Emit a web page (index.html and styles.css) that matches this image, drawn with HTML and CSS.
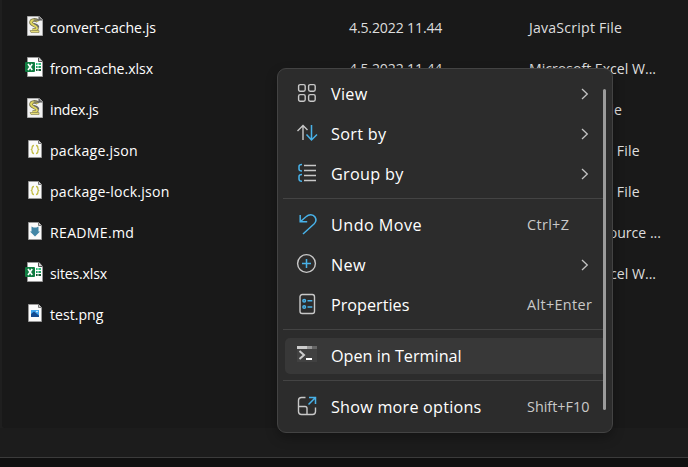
FILE: index.html
```html
<!DOCTYPE html>
<html lang="en">
<head>
<meta charset="utf-8">
<title>Files</title>
<link rel="stylesheet" href="styles.css">
</head>
<body>
<svg class="defs" width="0" height="0">
  <symbol id="js" viewBox="0 0 20 22">
    <path d="M2.500 1.500h12l3 3v16h-15z" fill="#f2f2f2" stroke="#aaa"/>
    <path d="M14 1.500v3.500h3.500" fill="#777" stroke="#555"/>
    <path d="M13 6.500C11 4 6 4.500 6 7.500c0 2.500 6 3 6 5.500 0 2-2 2-4.500 2" fill="none" stroke="#77734e" stroke-width="3.600"/>
    <path d="M13 6.500C11 4 6 4.500 6 7.500c0 2.500 6 3 6 5.500 0 2-2 2-4.500 2" fill="none" stroke="#e0d660" stroke-width="2"/>
    <path d="M9 8.500c2 1 5 1 4.500 4M8.500 5.200L14.500 5" fill="none" stroke="#666" stroke-width="1.300"/>
    <path d="M5 15.500h9v2H6z" fill="#e5dc78" stroke="#8a8555" stroke-width=".7"/>
  </symbol>
  <symbol id="xlsx" viewBox="0 0 20 22">
    <path d="M2.500 1.500h11.500l3.500 4v15h-15z" fill="#fff" stroke="#999"/>
    <path d="M13.500 1.500v4h4" fill="#ccc" stroke="#555"/>
    <path d="M11 7h5v2h-5z" fill="#33c481"/><path d="M11 10h5v2h-5z" fill="#21a366"/><path d="M11 13h5v2h-5z" fill="#185c37"/>
    <path d="M13 6v10" stroke="#fff" stroke-width=".8"/>
    <rect x="0" y="6" width="10" height="10" rx="1" fill="#107c41"/>
    <path d="M3 8l4.200 6M7.200 8l-4.200 6" stroke="#fff" stroke-width="1.600"/>
  </symbol>
  <symbol id="page" viewBox="0 0 20 22">
    <path d="M3.500 2.500h10l3 3v14h-13z" fill="#fafafa" stroke="#999"/>
    <path d="M13.500 2.500v3h3" fill="#ccc" stroke="#777"/>
  </symbol>
  <symbol id="json" viewBox="0 0 20 22">
    <use href="#page"/>
    <path d="M9 7.500c-3 0-1 3-2.500 4 1.500 1-.5 4 2.500 4M11 7.500c3 0 1 3 2.500 4-1.500 1 .5 4-2.500 4" fill="none" stroke="#c3bd45" stroke-width="1.300"/>
  </symbol>
  <symbol id="md" viewBox="0 0 20 22">
    <use href="#page"/>
    <path d="M6.500 6.500l2 1h3l2-1v5h1.500l-5 5-5-5h1.500z" fill="#4286a6"/>
  </symbol>
  <symbol id="png" viewBox="0 0 20 22">
    <use href="#page"/>
    <rect x="6" y="8" width="8" height="7" fill="#41a5ee"/>
    <path d="M6 12l3-2.500 5 4v1.500H6z" fill="#124a91"/><circle cx="12" cy="9.500" r=".8" fill="#fff"/>
  </symbol>
  <symbol id="chev" viewBox="0 0 8 12"><path d="M1 1l5.300 5L1 11" fill="none" stroke="#c4c4c4" stroke-width="1.300"/></symbol>
</svg>

<main class="pane">
  <ul class="files">
    <li class="file"><svg class="ficon"><use href="#js"/></svg><span>convert-cache.js</span><span class="date">4.5.2022 11.44</span><span class="type loose">JavaScript File</span></li>
    <li class="file"><svg class="ficon"><use href="#xlsx"/></svg><span>from-cache.xlsx</span><span class="date">4.5.2022 11.44</span><span class="type">Microsoft Excel W...</span></li>
    <li class="file"><svg class="ficon"><use href="#js"/></svg><span class="tight">index.js</span><span class="date"></span><span class="type loose">JavaScript File</span></li>
    <li class="file"><svg class="ficon"><use href="#json"/></svg><span class="loose">package.json</span><span class="date"></span><span class="type json">JSON Source File</span></li>
    <li class="file"><svg class="ficon"><use href="#json"/></svg><span class="loose">package-lock.json</span><span class="date"></span><span class="type json">JSON Source File</span></li>
    <li class="file"><svg class="ficon"><use href="#md"/></svg><span class="looser">README.md</span><span class="date"></span><span class="type md">Source ...</span></li>
    <li class="file"><svg class="ficon"><use href="#xlsx"/></svg><span class="tight">sites.xlsx</span><span class="date"></span><span class="type">Microsoft Excel W...</span></li>
    <li class="file"><svg class="ficon"><use href="#png"/></svg><span>test.png</span><span class="date"></span><span class="type"></span></li>
  </ul>
</main>
<footer class="status"></footer>

<nav class="menu">
  <div class="item">
    <svg class="icon" viewBox="0 0 20 20"><g class="line"><rect x="1.600" y="1.600" width="6.600" height="6.600" rx="1.600"/><rect x="11.600" y="1.600" width="6.600" height="6.600" rx="1.600"/><rect x="1.600" y="11.600" width="6.600" height="6.600" rx="1.600"/><rect x="11.600" y="11.600" width="6.600" height="6.600" rx="1.600"/></g></svg>
    <span class="looser">View</span><svg class="chev"><use href="#chev"/></svg>
  </div>
  <div class="item">
    <svg class="icon" viewBox="0 0 20 20"><path class="line" d="M6 17V2.500M.5 8L6 2.500 10.500 7"/><path class="blue" d="M14.500 2v15M9.500 11.500l5 5.500 5.500-5.500"/></svg>
    <span class="looser">Sort by</span><svg class="chev"><use href="#chev"/></svg>
  </div>
  <div class="item">
    <svg class="icon" viewBox="0 0 20 20"><path class="line" d="M7 2.500h12M7 7.500h12M7 12.500h12M7 17.500h12"/><path class="blue" d="M5 1.500C3 1.500 2 2 2 3.500v2.500C2 7.500 3 8 5 8M5 11.500c-2 0-3 .6-3 2v2.500c0 1.600 1 2.300 3 2.300"/></svg>
    <span class="looser">Group by</span><svg class="chev"><use href="#chev"/></svg>
  </div>
  <div class="sep"></div>
  <div class="item">
    <svg class="icon" viewBox="0 0 20 20"><path class="blue" d="M3.200 1v6.800h7M3.200 7.800l5.800-5C12 0 16 0 18 3c1.500 2.500 1 5-1 7L6 20"/></svg>
    <span class="undo">Undo Move</span><span class="key">Ctrl+Z</span>
  </div>
  <div class="item">
    <svg class="icon" viewBox="0 0 20 20"><circle class="line" cx="9.500" cy="9.500" r="8.900"/><path class="blue" d="M9.500 5v9M5 9.500h9"/></svg>
    <span class="looser">New</span><svg class="chev"><use href="#chev"/></svg>
  </div>
  <div class="item">
    <svg class="icon" viewBox="0 0 20 20"><rect class="line" x="3" y=".5" width="14.500" height="19" rx="2.200"/><g class="blue"><circle cx="7.200" cy="6.800" r="1.300"/><circle cx="7.200" cy="13" r="1.300"/><path d="M10.500 6.800h4.800M10.500 13h4.800"/></g></svg>
    <span>Properties</span><span class="key">Alt+Enter</span>
  </div>
  <div class="sep"></div>
  <div class="item active">
    <svg class="icon" viewBox="0 0 20 20"><path d="M0 1h20v16H0z" fill="#414141"/><path d="M0 1h10v3H0z" fill="#ccc"/><path d="M10 1h5v3h-5z" fill="#999"/><path d="M15 1h5v3h-5z" fill="#666"/><path d="M2.500 6l4.500 4-4.500 4" fill="none" stroke="#ccc" stroke-width="2"/><path d="M9 14h6" stroke="#fff" stroke-width="2"/></svg>
    <span>Open in Terminal</span>
  </div>
  <div class="sep"></div>
  <div class="item">
    <svg class="icon" viewBox="0 0 20 20"><path class="line" d="M8.500 1.500h-4C2.500 1.500 1.500 2.500 1.500 4.500v11c0 2 1 3 3 3h11c2 0 3-1 3-3v-4M1.500 10.500h6.500c1.500 0 2 .5 2 2v6"/><path class="blue" d="M12 1.500h6.500V8M18.500 1.500l-7 7"/></svg>
    <span class="loose">Show more options</span><span class="key f10">Shift+F10</span>
  </div>
  <div class="scroll"></div>
</nav>
</body>
</html>
```

FILE: styles.css
```css
* { box-sizing: border-box; }
body {
  margin: 0;
  height: 467px;
  overflow: hidden;
  background: #1f1f1f;
  font-family: "Open Sans", "Noto Sans", sans-serif;
  color: #fff;
}
.defs { display: block; }
.pane {
  margin-left: 2px;
  height: 428px;
  padding-top: 7px;
  background: #191919;
  border-bottom-left-radius: 3px;
}
.files { list-style: none; margin: 0; padding: 0 0 0 23px; }
.file {
  display: grid;
  grid-template-columns: 25px 299px 180px 1fr;
  align-items: center;
  height: 41px;
  font-size: 14.1px;
  white-space: nowrap;
}
.ficon { width: 20px; height: 22px; margin-bottom: 3px; }
.date, .type { color: #dedede; }
.date { letter-spacing: -.15px; }
.loose { letter-spacing: .22px; }
.looser { letter-spacing: .3px; }
.tight { letter-spacing: -.18px; }
.undo { letter-spacing: .45px; }
.json { letter-spacing: .18px; }
.md { justify-self: end; margin-right: 27px; }
.status {
  height: 39px;
  background: linear-gradient(#1c1c1c 29px, #3b3b3b 29px, #3b3b3b 30px, #101010 30px);
}
.menu {
  position: absolute;
  left: 277px;
  top: 68px;
  width: 336px;
  height: 365px;
  padding: 5px 5px;
  border: 1px solid #434343;
  border-radius: 9px;
  background: #2c2c2c;
  box-shadow: 0 5px 12px rgba(0, 0, 0, .28);
}
.item {
  display: grid;
  grid-template-columns: 34px 196px 1fr;
  align-items: center;
  height: 40px;
  padding-left: 14px;
  font-size: 16.2px;
  white-space: nowrap;
}
.active {
  height: 36px;
  margin: 2px 4px 2px 2px;
  padding-left: 12px;
  border-radius: 5px 0 0 5px;
  background: #383838;
}
.icon { width: 20px; height: 20px; margin-bottom: 2px; overflow: visible; }
.line { fill: none; stroke: #c8c8c8; stroke-width: 1.4; }
.blue { fill: none; stroke: #48b2e9; stroke-width: 1.5; }
.chev { width: 8px; height: 12px; margin-left: 54px; }
.key { font-size: 14.4px; color: #c9c9c9; letter-spacing: .35px; margin-bottom: 2px; }
.f10 { letter-spacing: 0; }
.sep { height: 11px; padding-top: 4px; margin-right: 2px; }
.sep::before { content: ""; display: block; height: 1px; background: #444; }
.scroll {
  position: absolute;
  right: 6px;
  top: 20px;
  width: 3px;
  height: 321px;
  border-radius: 2px;
  background: #9b9b9b;
}
```
